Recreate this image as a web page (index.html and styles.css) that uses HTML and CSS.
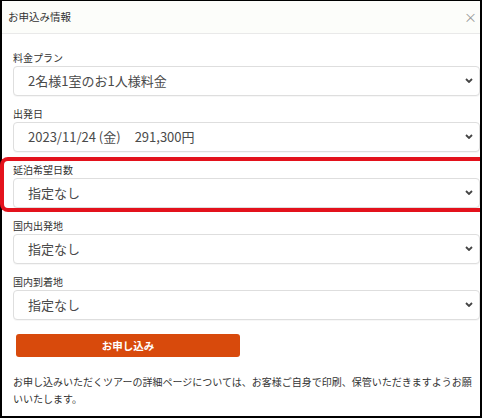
FILE: index.html
```html
<!DOCTYPE html>
<html lang="ja">
<head>
<meta charset="utf-8">
<title>お申込み情報</title>
<link rel="stylesheet" href="styles.css">
</head>
<body>
<div class="frame">
  <div class="screen">
    <div class="modal">
      <div class="modal-header">
        <span class="modal-title">お申込み情報</span>
        <span class="close">×</span>
      </div>
      <div class="modal-body">
        <div class="field">
          <div class="label">料金プラン</div>
          <div class="select"><span>2名様1室のお1人様料金</span><svg class="chev" viewBox="0 0 8 5" width="8" height="5"><path d="M1 1 L4 4 L7 1" fill="none" stroke="#444" stroke-width="1.8"/></svg></div>
        </div>
        <div class="field">
          <div class="label">出発日</div>
          <div class="select"><span>2023/11/24 (金)<span class="gap"></span>291,300円</span><svg class="chev" viewBox="0 0 8 5" width="8" height="5"><path d="M1 1 L4 4 L7 1" fill="none" stroke="#444" stroke-width="1.8"/></svg></div>
        </div>
        <div class="field">
          <div class="label">延泊希望日数</div>
          <div class="select"><span>指定なし</span><svg class="chev" viewBox="0 0 8 5" width="8" height="5"><path d="M1 1 L4 4 L7 1" fill="none" stroke="#444" stroke-width="1.8"/></svg></div>
        </div>
        <div class="field">
          <div class="label">国内出発地</div>
          <div class="select"><span>指定なし</span><svg class="chev" viewBox="0 0 8 5" width="8" height="5"><path d="M1 1 L4 4 L7 1" fill="none" stroke="#444" stroke-width="1.8"/></svg></div>
        </div>
        <div class="field">
          <div class="label">国内到着地</div>
          <div class="select"><span>指定なし</span><svg class="chev" viewBox="0 0 8 5" width="8" height="5"><path d="M1 1 L4 4 L7 1" fill="none" stroke="#444" stroke-width="1.8"/></svg></div>
        </div>
        <div class="btn-row">
          <button class="submit">お申し込み</button>
        </div>
        <p class="note">お申し込みいただくツアーの詳細ページについては、お客様ご自身で印刷、保管いただきますようお願いいたします。</p>
      </div>
    </div>
  </div>
  <div class="highlight"></div>
</div>
</body>
</html>
```
FILE: styles.css
```css
html, body {
  margin: 0;
  padding: 0;
  background: #000;
}
body {
  font-family: "Noto Sans CJK JP", "Noto Sans", sans-serif;
  color: #333;
}
.frame {
  position: relative;
  width: 482px;
  height: 418px;
  box-sizing: border-box;
  padding: 1px 2px 2px 2px;
  background: #000;
}
.screen {
  width: 478px;
  height: 415px;
  background: #fff;
  overflow: hidden;
}
.modal {
  width: 500px;
}
.modal-header {
  height: 33px;
  box-sizing: border-box;
  display: flex;
  align-items: center;
  justify-content: space-between;
  padding: 0 25px 2px 6px;
  background: #fcfdfa;
  border-bottom: 1px solid #e9e9e9;
}
.modal-title {
  font-size: 10.5px;
  color: #333;
}
.close {
  font-size: 13px;
  color: #999;
  line-height: 1;
}
.modal-body {
  padding: 16px 22px 0 11px;
}
.field {
  margin-bottom: 10px;
}
.label {
  font-size: 10px;
  line-height: 16px;
  height: 16px;
  color: #333;
}
.select {
  height: 30px;
  box-sizing: border-box;
  border: 1px solid #dedede;
  border-radius: 4px;
  display: flex;
  align-items: center;
  justify-content: space-between;
  padding: 0 6px 2px 14px;
  font-size: 13px;
  color: #4a4a4a;
  background: #fff;
  box-shadow: 0 1px 0 rgba(0,0,0,0.03);
}
.gap {
  display: inline-block;
  width: 14px;
}
.chev {
  display: block;
}
.btn-row {
  padding: 4px 0 0 3px;
}
.submit {
  width: 224px;
  height: 23px;
  border: none;
  border-radius: 3px;
  background: #d84a0c;
  color: #fff;
  font-family: "Noto Sans CJK JP", "Noto Sans", sans-serif;
  font-size: 10.5px;
  font-weight: bold;
  padding: 0;
  display: block;
}
.note {
  margin: 16px 0 0 0;
  font-size: 10px;
  line-height: 17px;
  color: #333;
}
.highlight {
  position: absolute;
  left: 0;
  top: 157px;
  width: 480px;
  height: 55px;
  box-sizing: border-box;
  border: 4px solid #e3121c;
  border-right: none;
  border-radius: 8px 0 0 8px;
}
```
